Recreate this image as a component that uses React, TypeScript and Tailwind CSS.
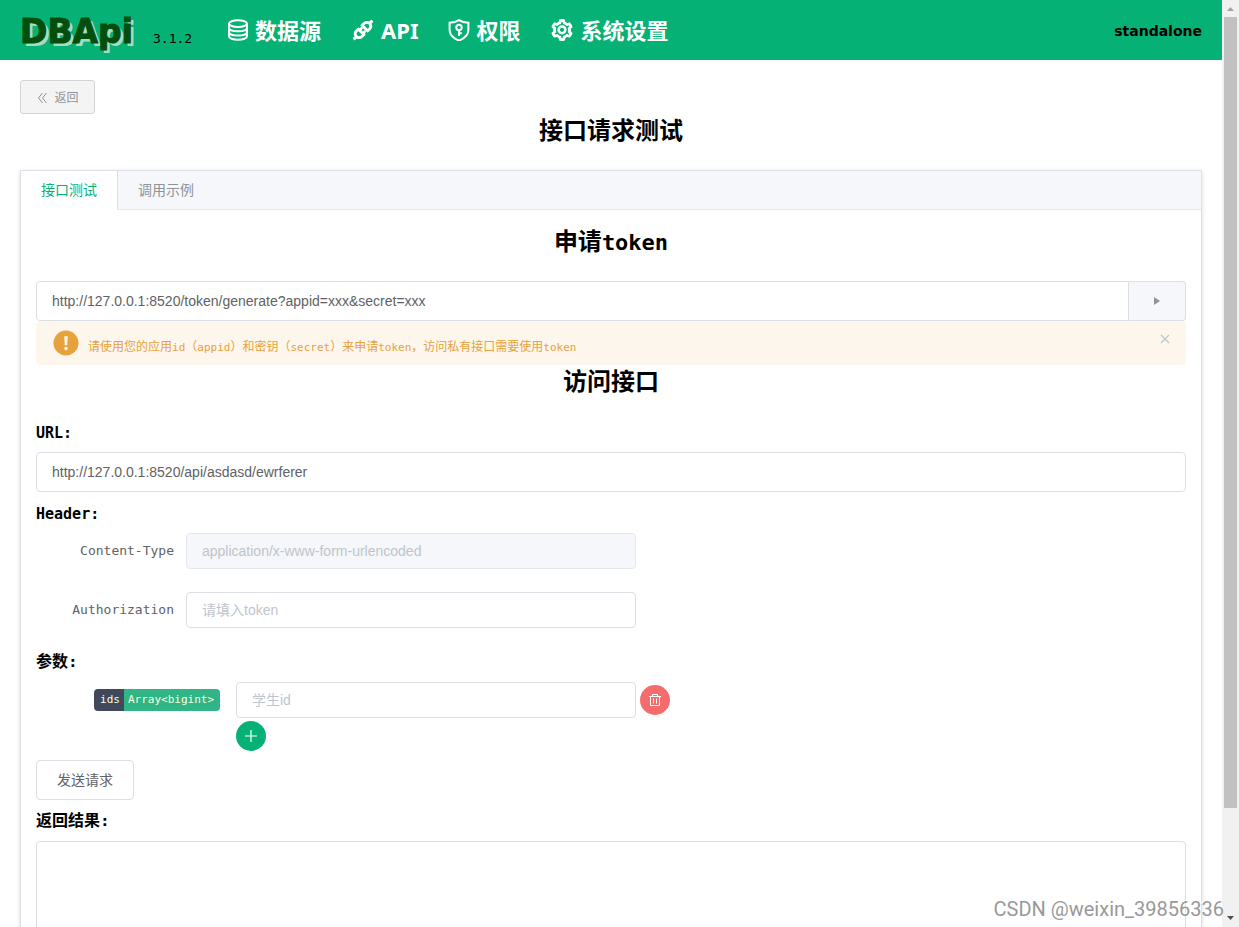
import React, { useState } from 'react';
import { AiOutlineApi, AiOutlineSetting } from 'react-icons/ai';

const navLink = 'flex items-center gap-1.5 text-[22px] font-bold text-white';
const heading = 'text-center text-2xl font-bold leading-8 text-black';
const inputBase =
  "w-full rounded border px-[15px] font-['Liberation_Sans','Noto_Sans_CJK_SC',sans-serif] text-sm placeholder-[#c0c4cc] outline-none";
const textInput = `${inputBase} border-[#dcdfe6] bg-white text-[#606266]`;
const disabledInput = `${inputBase} border-[#e4e7ed] bg-[#f5f7fa] text-[#c0c4cc]`;
const mono = "font-['DejaVu_Sans_Mono','Noto_Sans_CJK_SC',monospace]";
const fieldLabel = `${mono} w-[150px] shrink-0 pr-3 text-right text-[13px] text-[#606266]`;
const sectionLabel = `${mono} block font-bold leading-6 text-black`;

const DatabaseIcon = () => (
  <svg className="size-[22px]" viewBox="0 0 22 22" fill="none" stroke="currentColor" strokeWidth="2">
    <ellipse cx="11" cy="4.6" rx="9" ry="3.4" />
    <path d="M2 4.6v12.6c0 2 4 3.5 9 3.5s9-1.5 9-3.5V4.6" />
    <path d="M2 9c0 2 4 3.3 9 3.3S20 11 20 9M2 13.2c0 2 4 3.3 9 3.3s9-1.3 9-3.3" />
  </svg>
);

const ShieldKeyIcon = () => (
  <svg className="size-[22px]" viewBox="0 0 22 22" fill="none" stroke="currentColor" strokeWidth="2">
    <path d="M11 1.2C8.5 2.8 5.5 3.6 1.6 3.7V11c0 5 3.6 8.2 9.4 10.6 5.8-2.4 9.4-5.6 9.4-10.6V3.7C16.5 3.6 13.5 2.8 11 1.2z" />
    <circle cx="11" cy="8.5" r="2.7" />
    <path d="M11 11v6M11 14.3h2.8" />
  </svg>
);

const TrashIcon = () => (
  <svg className="size-3.5" viewBox="0 0 14 14" fill="none" stroke="currentColor">
    <path d="M1 3.5h12M4.5 3V1.5h5V3M2.5 3.5v9h9v-9M5.5 5.5v5M8.5 5.5v5" />
  </svg>
);

const Scrollbar = () => (
  <div className="flex w-[17px] shrink-0 flex-col items-center bg-[#f1f1f1]" aria-hidden="true">
    <svg className="h-[17px] w-[17px] shrink-0" viewBox="0 0 17 17">
      <path d="M5 11h7L8.5 7z" fill="#a3a3a3" />
    </svg>
    <div className="w-[13px] grow bg-[#c1c1c1]" />
    <div className="h-[102px]" />
    <svg className="h-[17px] w-[17px] shrink-0" viewBox="0 0 17 17">
      <path d="M5 6h7l-3.5 4z" fill="#505050" />
    </svg>
  </div>
);

const Header = () => (
  <header className="flex h-[60px] items-center bg-[#06b176] px-5">
    <div className="w-[207px] pt-1 whitespace-nowrap">
      <span className="font-['DejaVu_Sans',sans-serif] text-[33px] font-bold text-[#034e0c] [-webkit-text-stroke:1px_#034e0c] [text-shadow:3px_3px_0_#a5dcc3]">
        DBApi
      </span>
      <span className={`${mono} ml-5 text-[13px] text-black`}>3.1.2</span>
    </div>
    <nav className="flex items-center gap-[30px]">
      <a href="#datasource" className={navLink}>
        <DatabaseIcon />
        数据源
      </a>
      <a href="#api" className={navLink}>
        <AiOutlineApi className="size-6" strokeWidth="50" />
        API
      </a>
      <a href="#auth" className={navLink}>
        <ShieldKeyIcon />
        权限
      </a>
      <a href="#settings" className={navLink}>
        <AiOutlineSetting className="size-6" strokeWidth="44" />
        系统设置
      </a>
    </nav>
    <span className="ml-auto pt-0.5 font-['DejaVu_Sans',sans-serif] text-sm font-bold text-black">standalone</span>
  </header>
);

const App: React.FC = () => {
  const [tokenUrl, setTokenUrl] = useState('http://127.0.0.1:8520/token/generate?appid=xxx&secret=xxx');
  const [url, setUrl] = useState('http://127.0.0.1:8520/api/asdasd/ewrferer');
  const [token, setToken] = useState('');
  const [ids, setIds] = useState('');
  const [showTip, setShowTip] = useState(true);

  return (
    <div className="relative flex h-screen overflow-hidden bg-white font-['Noto_Sans','Noto_Sans_CJK_SC',sans-serif]">
      <div className="min-w-0 flex-1">
        <Header />
        <main className="px-5 pt-5">
          <button
            type="button"
            className="flex h-[34px] w-[75px] items-center justify-center gap-1.5 rounded-[3px] border border-[#d3d4d6] bg-[#f4f4f5] pt-0.5 text-xs text-[#909399]"
          >
            <svg className="size-3" viewBox="0 0 12 12" fill="none" stroke="currentColor">
              <path d="M6.5 1l-4 5 4 5M10.5 1l-4 5 4 5" />
            </svg>
            返回
          </button>
          <h2 className={heading}>接口请求测试</h2>

          <div className="mt-6 border border-[#dcdfe6] bg-white shadow-[0_2px_4px_0_rgba(0,0,0,0.12),0_0_6px_0_rgba(0,0,0,0.04)]">
            <div className="flex h-[39px] border-b border-[#e4e7ed] bg-[#f5f7fa] text-sm" role="tablist">
              <button
                type="button"
                role="tab"
                aria-selected="true"
                className="-mb-px border-r border-[#dcdfe6] bg-white px-5 pb-px text-[#06b176]"
              >
                接口测试
              </button>
              <button type="button" role="tab" aria-selected="false" className="px-5 text-[#909399]">
                调用示例
              </button>
            </div>

            <div className="px-[15px] pt-[15px]">
              <h2 className={heading}>
                申请<span className={`${mono} text-[22px]`}>token</span>
              </h2>
              <div className="mt-[22px] flex">
                <input
                  aria-label="token"
                  className={`${textInput} h-10 rounded-r-none`}
                  value={tokenUrl}
                  onChange={(e) => setTokenUrl(e.target.value)}
                />
                <button
                  type="button"
                  aria-label="申请token"
                  className="flex w-[57px] shrink-0 items-center justify-center rounded-r border border-l-0 border-[#dcdfe6] bg-[#f5f7fa] text-[#909399]"
                >
                  <svg className="h-2 w-1.5" viewBox="0 0 6 8" fill="currentColor">
                    <path d="M0 0v8l6-4z" />
                  </svg>
                </button>
              </div>
              {showTip && (
                <div className="flex h-11 items-center rounded bg-[#fdf6ec] px-4 text-xs text-[#e6a23c]">
                  <svg className="size-7 shrink-0" viewBox="0 0 28 28">
                    <circle cx="14" cy="14" r="12.5" fill="#e6a23c" />
                    <path d="M12.2 7.2h3.6l-.6 9h-2.4z" fill="#fdf6ec" />
                    <circle cx="14" cy="19.5" r="1.8" fill="#fdf6ec" />
                  </svg>
                  <p className="ml-2 pt-2">
                    请使用您的应用<span className={`${mono} text-[11px]`}>id</span>（
                    <span className={`${mono} text-[11px]`}>appid</span>）和密钥（
                    <span className={`${mono} text-[11px]`}>secret</span>）来申请
                    <span className={`${mono} text-[11px]`}>token</span>，访问私有接口需要使用
                    <span className={`${mono} text-[11px]`}>token</span>
                  </p>
                  <button
                    type="button"
                    aria-label="关闭"
                    className="mb-2 ml-auto text-[#c0c4cc]"
                    onClick={() => setShowTip(false)}
                  >
                    <svg className="size-2.5" viewBox="0 0 10 10" fill="none" stroke="currentColor" strokeWidth="1.2">
                      <path d="M1 1l8 8M9 1L1 9" />
                    </svg>
                  </button>
                </div>
              )}

              <h2 className={heading}>访问接口</h2>
              <label htmlFor="url" className={`${sectionLabel} mt-6 mb-[7px] text-[15px]`}>
                URL:
              </label>
              <input
                id="url"
                className={`${textInput} h-10`}
                value={url}
                onChange={(e) => setUrl(e.target.value)}
              />
              <h4 className={`${sectionLabel} mt-2.5 mb-[7px] text-[15px]`}>Header:</h4>
              <div className="flex items-center">
                <label htmlFor="contentType" className={fieldLabel}>Content-Type</label>
                <div className="w-[450px]">
                  <input
                    id="contentType"
                    className={`${disabledInput} h-9`}
                    value="application/x-www-form-urlencoded"
                    disabled
                    readOnly
                  />
                </div>
              </div>
              <div className="mt-[23px] flex items-center">
                <label htmlFor="authorization" className={fieldLabel}>Authorization</label>
                <div className="w-[450px]">
                  <input
                    id="authorization"
                    className={`${textInput} h-9`}
                    placeholder="请填入token"
                    value={token}
                    onChange={(e) => setToken(e.target.value)}
                  />
                </div>
              </div>

              <h4 className={`${sectionLabel} mt-[22px] mb-2 text-base/6`}>参数:</h4>
              <div className="flex items-center">
                <label htmlFor="ids" className={`${mono} flex w-[200px] shrink-0 justify-end pr-4 text-[11px] leading-[22px] text-[#fefedf]`}>
                  <span className="rounded-l bg-[#40485b] pr-1 pl-1.5">ids</span>
                  <span className="rounded-r bg-[#2fb586] pr-1.5 pl-1">Array&lt;bigint&gt;</span>
                </label>
                <div className="w-[400px]">
                  <input
                    id="ids"
                    className={`${textInput} h-9`}
                    placeholder="学生id"
                    value={ids}
                    onChange={(e) => setIds(e.target.value)}
                  />
                </div>
                <button
                  type="button"
                  aria-label="删除"
                  className="ml-1 flex size-[30px] items-center justify-center rounded-full bg-[#f56c6c] text-white"
                >
                  <TrashIcon />
                </button>
              </div>
              <button
                type="button"
                aria-label="添加"
                className="mt-[3px] ml-[200px] flex size-[30px] items-center justify-center rounded-full bg-[#06b176] text-white"
              >
                <svg className="size-3.5" viewBox="0 0 14 14" fill="none" stroke="currentColor" strokeWidth="1.2">
                  <path d="M7 1v12M1 7h12" />
                </svg>
              </button>
              <button
                type="button"
                className="mt-[9px] block h-10 rounded border border-[#dcdfe6] bg-white px-5 text-sm text-[#606266]"
              >
                发送请求
              </button>
              <label htmlFor="result" className={`${sectionLabel} mt-[9px] mb-2 text-base/6`}>返回结果:</label>
              <textarea id="result" className={`${textInput} block h-[400px] resize-none`} readOnly />
            </div>
          </div>
        </main>
      </div>
      <Scrollbar />
      <div className="pointer-events-none absolute right-[15px] bottom-1 font-['Roboto',sans-serif] text-xl text-[#999999] [text-shadow:-1px_-1px_0_#ffffff]">
        CSDN @weixin_39856336
      </div>
    </div>
  );
};

export default App;
